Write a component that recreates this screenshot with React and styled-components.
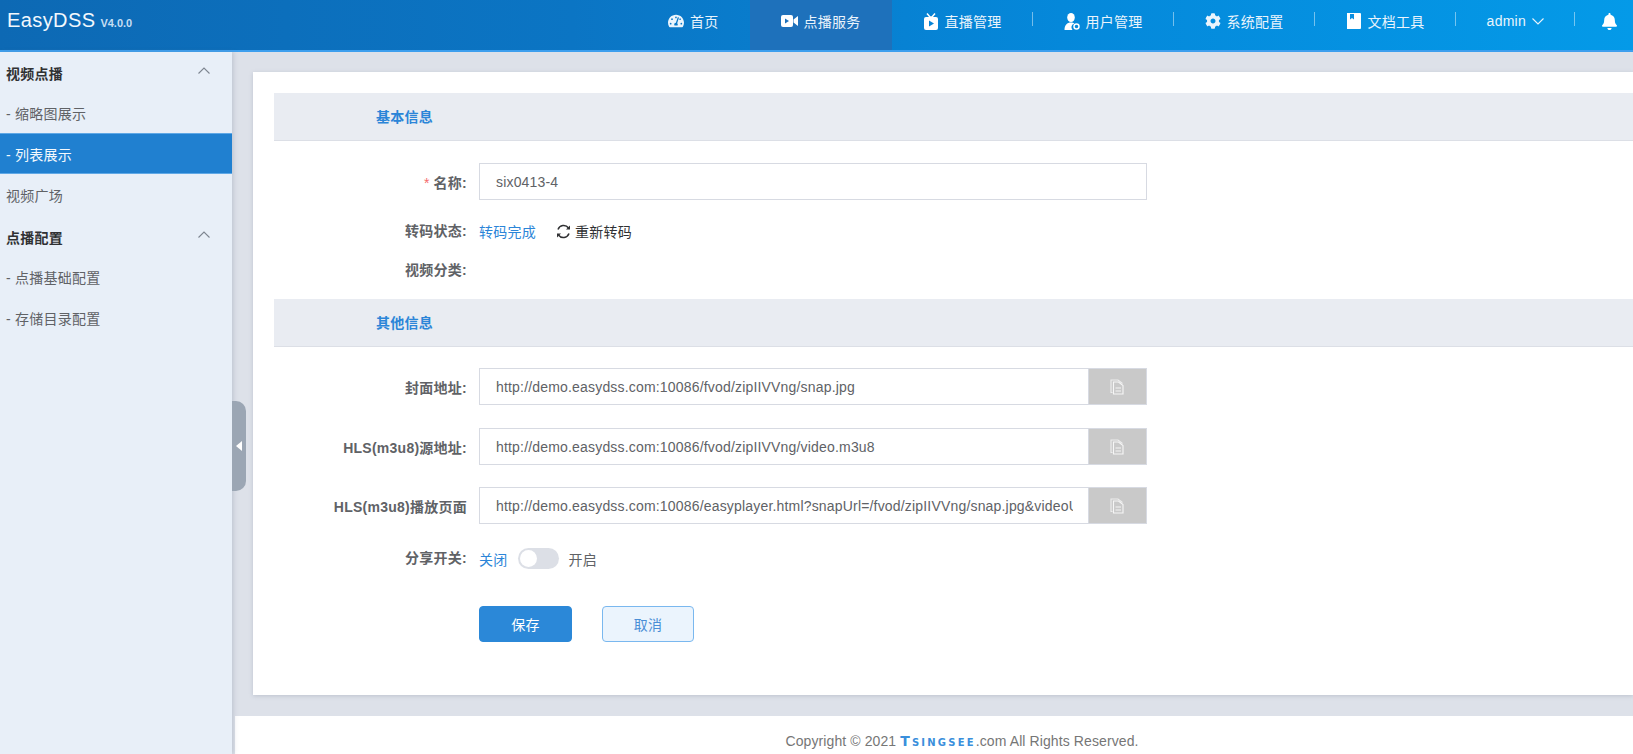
import React from 'react';
import styled, { createGlobalStyle } from 'styled-components';
import { FaTachometerAlt, FaCog, FaBell } from 'react-icons/fa';

const Global = createGlobalStyle`
	html, body {
		margin: 0;
		height: 100%;
		overflow: hidden;
		background: #fff;
		font-family: "Liberation Sans", "Noto Sans CJK SC", sans-serif;
		font-size: 14px;
		letter-spacing: 0.25px;
	}
	* { box-sizing: border-box; }
`;

const Page = styled.div`
	width: 1633px;
	height: 754px;
	display: flex;
	flex-direction: column;
	overflow: hidden;
`;

const Header = styled.header`
	height: 52px;
	flex: none;
	display: flex;
	justify-content: space-between;
	background: linear-gradient(90deg, #0d69b4 0%, #0b75c4 35%, #0588da 65%, #049ae8 100%);
	border-bottom: 2px solid #3d9fee;
	color: #fff;
`;

const Logo = styled.div`
	padding: 7px 0 0 7px;
	font-size: 20px;
	line-height: 27px;
	letter-spacing: 0.4px;
	color: #f2f8fd;
	small {
		margin-left: 5px;
		font-size: 11px;
		font-weight: bold;
		letter-spacing: 0;
		color: #c5def3;
	}
`;

const Nav = styled.nav`
	display: flex;
	height: 50px;
`;

const NavItem = styled.div`
	position: relative;
	height: 50px;
	padding: 0 31px 8px;
	display: flex;
	align-items: center;
	gap: 6px;
	color: #eaf4fc;
	background: ${p => (p.$active ? '#1e71bb' : 'transparent')};
	svg { flex: none; }
	&::after {
		content: '';
		display: ${p => (p.$divider ? 'block' : 'none')};
		position: absolute;
		right: 0;
		top: 12px;
		width: 1px;
		height: 14px;
		background: rgba(255, 255, 255, 0.45);
	}
`;

const Bell = styled.div`
	width: 58px;
	height: 50px;
	padding: 0 0 8px 26px;
	display: flex;
	align-items: center;
`;

const Body = styled.div`
	flex: 1;
	min-height: 0;
	display: flex;
`;

const Sidebar = styled.aside`
	position: relative;
	z-index: 2;
	width: 232px;
	flex: none;
	background: #e8eff8;
	box-shadow: 2px 0 4px rgba(120, 130, 150, 0.25);
`;

const GroupTitle = styled.div`
	height: ${p => p.$h || 41}px;
	padding: 2px 22px 0 6px;
	display: flex;
	align-items: center;
	justify-content: space-between;
	font-weight: bold;
	color: #303133;
	svg { margin-bottom: 5px; }
`;

const MenuItem = styled.div`
	height: 41px;
	padding-left: 6px;
	display: flex;
	align-items: center;
	color: ${p => (p.$active ? '#f4f9fd' : '#606266')};
	background: ${p => (p.$active ? '#2080d0' : 'transparent')};
	border-top: 1px solid ${p => (p.$active ? '#5fa8e6' : 'transparent')};
	border-bottom: 1px solid ${p => (p.$active ? '#5fa8e6' : 'transparent')};
`;

const Collapse = styled.div`
	position: absolute;
	left: 100%;
	top: 349px;
	width: 14px;
	height: 90px;
	display: flex;
	align-items: center;
	justify-content: center;
	background: #9ba6b4;
	border-radius: 0 10px 10px 0;
	&::before {
		content: '';
		border-style: solid;
		border-width: 5px 6px 5px 0;
		border-color: transparent #fff transparent transparent;
	}
`;

const Main = styled.main`
	flex: 1;
	min-width: 0;
	display: flex;
	flex-direction: column;
	background: #dde1e9;
`;

const Card = styled.section`
	height: 623px;
	margin: 20px 0 21px 21px;
	padding: 21px 0 0 21px;
	background: #fff;
	box-shadow: 0 1px 4px rgba(120, 130, 150, 0.3);
`;

const SectionHead = styled.h3`
	margin: ${p => p.$top || 0}px 0 0;
	height: 48px;
	padding: 0 0 2px 102px;
	display: flex;
	align-items: center;
	font-size: 14px;
	font-weight: bold;
	color: #2b85d8;
	background: #e9ecf2;
	border-bottom: 1px solid #dcdfe6;
`;

const Row = styled.div`
	display: flex;
	align-items: center;
	gap: 12px;
	height: ${p => p.$h || 37}px;
	margin-top: ${p => p.$top || 0}px;
`;

const Label = styled.label`
	width: 193px;
	flex: none;
	padding-bottom: ${p => p.$raise || 0}px;
	text-align: right;
	font-weight: bold;
	color: #606266;
	white-space: nowrap;
	em {
		margin-right: 4px;
		font-style: normal;
		font-weight: normal;
		color: #f56c6c;
	}
`;

const Input = styled.input`
	width: ${p => p.$w}px;
	height: 37px;
	padding: 0 15px 0 16px;
	font: inherit;
	letter-spacing: 0.18px;
	color: #606266;
	background: #fff;
	border: 1px solid #d7dae2;
	border-radius: 0;
	outline: none;
`;

const Group = styled.div`
	display: flex;
`;

const CopyBtn = styled.div`
	width: 58px;
	height: 37px;
	padding-right: 2px;
	display: flex;
	align-items: center;
	justify-content: center;
	background: #c9c9c9;
	border: 1px solid #d7dae2;
	border-left: 0;
`;

const Link = styled.span`
	color: #2b85d8;
`;

const Retrans = styled.span`
	margin-left: 8px;
	display: inline-flex;
	align-items: center;
	gap: 4px;
	color: #303133;
`;

const Inline = styled.div`
	display: flex;
	align-items: center;
	gap: 10px;
	color: #606266;
`;

const Switch = styled.div`
	width: 41px;
	height: 21px;
	padding: 2px;
	border-radius: 11px;
	background: #dcdfe6;
	&::before {
		content: '';
		display: block;
		width: 17px;
		height: 17px;
		border-radius: 50%;
		background: #fff;
	}
`;

const Actions = styled.div`
	margin: 37px 0 0 205px;
	display: flex;
	gap: 30px;
`;

const Button = styled.button`
	width: ${p => (p.$plain ? 92 : 93)}px;
	height: 36px;
	padding: 0;
	font: inherit;
	letter-spacing: inherit;
	border-radius: 4px;
	border: 1px solid ${p => (p.$plain ? '#7ab8ef' : '#2b88d8')};
	background: ${p => (p.$plain ? '#ebf4fd' : '#2b88d8')};
	color: ${p => (p.$plain ? '#4a8ed6' : '#fff')};
`;

const Footer = styled.footer`
	flex: 1;
	display: flex;
	align-items: flex-end;
	justify-content: center;
	gap: 4px;
	padding: 0 0 3px 56px;
	margin-left: 3px;
	background: #fff;
	color: #767676;
	line-height: 20px;
	letter-spacing: 0.1px;
`;

const Brand = styled.span`
	font-family: "DejaVu Sans", sans-serif;
	font-size: 14px;
	font-weight: bold;
	font-variant: small-caps;
	letter-spacing: 2.2px;
	color: #3a8fdc;
	& + span { margin-left: -4px; }
`;

const Chevron = ({ up, color }) => (
	<svg width="12" height="7" viewBox="0 0 12 7" fill="none" stroke={color} strokeWidth="1.100">
		<path d={up ? 'M0.500 6.500 6 1l5.500 5.500' : 'M0.500 0.500 6 6l5.500-5.500'} />
	</svg>
);

// nav icons that the packages don't carry in this shape
const VideoIcon = () => (
	<svg width="17" height="14" viewBox="0 0 17 14" fill="#fff">
		<rect x="0" y="1" width="12" height="12" rx="2" />
		<path d="M12.500 5.500 17 2v10l-4.500-3.500z" />
		<path d="M4 4.500 8 7l-4 2.500z" fill="#1e71bb" />
	</svg>
);

const TvIcon = () => (
	<svg width="16" height="17" viewBox="0 0 16 17" fill="#fff">
		<path d="M4 0.500 7 4H9L12 0.500" fill="none" stroke="#fff" strokeWidth="1.500" />
		<rect x="1" y="4" width="14" height="13" rx="2" />
		<path d="M6 7.500 11 10.500 6 13.500z" fill="#0784d6" />
	</svg>
);

const UserIcon = () => (
	<svg width="16" height="17" viewBox="0 0 16 17" fill="#fff">
		<ellipse cx="7" cy="4.500" rx="3.800" ry="4.500" />
		<path d="M0.500 17c0-5 2.500-7.500 6.500-7.500 1.500 0 2.500.3 3.300.9A4 4 0 0 0 8.500 17z" />
		<circle cx="12.500" cy="13.500" r="2.500" fill="none" stroke="#fff" strokeWidth="1.500" />
	</svg>
);

const BookIcon = () => (
	<svg width="16" height="16" viewBox="0 0 16 16" fill="#fff">
		<path d="M1 0H14a1 1 0 0 1 1 1V15a1 1 0 0 1-1 1H1z" />
		<path d="M4 1H8V6.500L6 5 4 6.500z" fill="#0b8fe0" />
	</svg>
);

const CopyIcon = () => (
	<svg width="14" height="16" viewBox="0 0 14 16" fill="none" stroke="#f6f6f6" strokeWidth="1.100">
		<path d="M2.500 13.500H1V1H8L12.500 4.500" opacity="0.8" />
		<path d="M3.500 3H8.500L13 6.500V15H3.500z" />
		<path d="M5.500 9H11M5.500 12H11" />
	</svg>
);

const RefreshIcon = () => (
	<svg width="15" height="15" viewBox="0 0 15 15" fill="none" stroke="#303133" strokeWidth="1.500">
		<path d="M2 5.500A6 6 0 0 1 12.500 4" />
		<path d="M13 9.500A6 6 0 0 1 2.500 11" />
		<path d="M14 1.500V5.500H10z" fill="#303133" stroke="none" />
		<path d="M1 13.500V9.500H5z" fill="#303133" stroke="none" />
	</svg>
);

const navItems = [
	{ icon: <FaTachometerAlt size={16} />, text: '首页' },
	{ icon: <VideoIcon />, text: '点播服务', active: true },
	{ icon: <TvIcon />, text: '直播管理', divider: true },
	{ icon: <UserIcon />, text: '用户管理', divider: true },
	{ icon: <FaCog size={16} />, text: '系统配置', divider: true },
	{ icon: <BookIcon />, text: '文档工具', divider: true },
];

const urls = [
	{ label: '封面地址:', value: 'http://demo.easydss.com:10086/fvod/zipIIVVng/snap.jpg', top: 21 },
	{ label: 'HLS(m3u8)源地址:', value: 'http://demo.easydss.com:10086/fvod/zipIIVVng/video.m3u8', top: 23 },
	{ label: 'HLS(m3u8)播放页面', value: 'http://demo.easydss.com:10086/easyplayer.html?snapUrl=/fvod/zipIIVVng/snap.jpg&videoUrl=/fvod/zipIIVVng/video.m3u8', top: 22 },
];

export default function App() {
	return (
		<Page>
			<Global />
			<Header>
				<Logo>EasyDSS<small>V4.0.0</small></Logo>
				<Nav>
					{navItems.map(n => (
						<NavItem key={n.text} $active={n.active} $divider={n.divider}>
							{n.icon}
							{n.text}
						</NavItem>
					))}
					<NavItem $divider>
						admin
						<Chevron color="#eaf4fc" />
					</NavItem>
					<Bell><FaBell size={17} /></Bell>
				</Nav>
			</Header>
			<Body>
				<Sidebar>
					<GroupTitle $h={40}>视频点播<Chevron up color="#7d8590" /></GroupTitle>
					<MenuItem>- 缩略图展示</MenuItem>
					<MenuItem $active>- 列表展示</MenuItem>
					<MenuItem>视频广场</MenuItem>
					<GroupTitle>点播配置<Chevron up color="#7d8590" /></GroupTitle>
					<MenuItem>- 点播基础配置</MenuItem>
					<MenuItem>- 存储目录配置</MenuItem>
					<Collapse />
				</Sidebar>
				<Main>
					<Card>
						<SectionHead>基本信息</SectionHead>
						<Row $top={22}>
							<Label><em>*</em>名称:</Label>
							<Input $w={668} readOnly value="six0413-4" />
						</Row>
						<Row $h={40} $top={11}>
							<Label $raise={2}>转码状态:</Label>
							<Link>转码完成</Link>
							<Retrans><RefreshIcon />重新转码</Retrans>
						</Row>
						<Row $h={40}>
							<Label $raise={4}>视频分类:</Label>
						</Row>
						<SectionHead $top={8}>其他信息</SectionHead>
						{urls.map(u => (
							<Row key={u.label} $top={u.top}>
								<Label>{u.label}</Label>
								<Group>
									<Input $w={610} readOnly value={u.value} />
									<CopyBtn><CopyIcon /></CopyBtn>
								</Group>
							</Row>
						))}
						<Row $h={21} $top={24}>
							<Label $raise={4}>分享开关:</Label>
							<Inline>
								<Link>关闭</Link>
								<Switch />
								开启
							</Inline>
						</Row>
						<Actions>
							<Button>保存</Button>
							<Button $plain>取消</Button>
						</Actions>
					</Card>
					<Footer>
						Copyright © 2021 <Brand>Tsingsee</Brand><span>.com All Rights Reserved.</span>
					</Footer>
				</Main>
			</Body>
		</Page>
	);
}
